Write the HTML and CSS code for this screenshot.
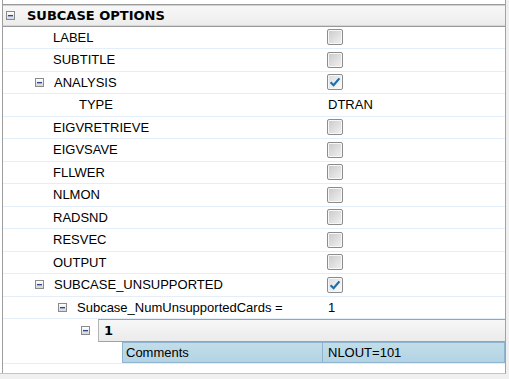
FILE: index.html
```html
<!DOCTYPE html>
<html>
<head>
<meta charset="utf-8">
<link rel="stylesheet" href="styles.css">
</head>
<body>
<div class="panel">
  <div class="grid">
    <div class="row head">
      <span class="tog"></span><span class="htext">SUBCASE OPTIONS</span>
    </div>
    <div class="row"><div class="name p1">LABEL</div><div class="val"><span class="cb"></span></div></div>
    <div class="row"><div class="name p1">SUBTITLE</div><div class="val"><span class="cb"></span></div></div>
    <div class="row"><div class="name i1"><span class="tog"></span>ANALYSIS</div><div class="val"><span class="cb on"><svg width="14" height="14" viewBox="0 0 14 14"><path d="M2.6 7.2 L5.6 10.2 L11.4 3.4" fill="none" stroke="#1a6fae" stroke-width="2.2"/></svg></span></div></div>
    <div class="row"><div class="name p2">TYPE</div><div class="val"><span class="vtext">DTRAN</span></div></div>
    <div class="row"><div class="name p1">EIGVRETRIEVE</div><div class="val"><span class="cb"></span></div></div>
    <div class="row"><div class="name p1">EIGVSAVE</div><div class="val"><span class="cb"></span></div></div>
    <div class="row"><div class="name p1">FLLWER</div><div class="val"><span class="cb"></span></div></div>
    <div class="row"><div class="name p1">NLMON</div><div class="val"><span class="cb"></span></div></div>
    <div class="row"><div class="name p1">RADSND</div><div class="val"><span class="cb"></span></div></div>
    <div class="row"><div class="name p1">RESVEC</div><div class="val"><span class="cb"></span></div></div>
    <div class="row"><div class="name p1">OUTPUT</div><div class="val"><span class="cb"></span></div></div>
    <div class="row"><div class="name i1"><span class="tog"></span>SUBCASE_UNSUPPORTED</div><div class="val"><span class="cb on"><svg width="14" height="14" viewBox="0 0 14 14"><path d="M2.6 7.2 L5.6 10.2 L11.4 3.4" fill="none" stroke="#1a6fae" stroke-width="2.2"/></svg></span></div></div>
    <div class="row"><div class="name i2"><span class="tog"></span>Subcase_NumUnsupportedCards =</div><div class="val"><span class="vtext">1</span></div></div>
    <div class="row grp">
      <span class="tog"></span>
      <div class="band"><span class="btext">1</span></div>
    </div>
    <div class="row sel">
      <div class="selbox">
        <div class="scell sname">Comments</div>
        <div class="scell svalue">NLOUT=101</div>
      </div>
    </div>
  </div>
</div>
</body>
</html>
```

FILE: styles.css
```css
html, body {
  margin: 0;
  padding: 0;
}
body {
  background: #f0f0f0;
  font-family: "Liberation Sans", Arial, sans-serif;
  font-size: 13px;
  color: #000;
}
.panel {
  width: 506px;
  height: 374px;
  box-sizing: border-box;
  background: #fff;
  padding-left: 2px;
  border-right: 1px solid #a3a3a3;
  border-bottom: 1px solid #c4c4c4;
}
.grid {
  height: 100%;
  box-sizing: border-box;
  border-left: 1px solid #9e9e9e;
  padding-top: 4px;
}
.row {
  height: 22.5px;
  box-sizing: border-box;
  display: flex;
  align-items: center;
  border-bottom: 1px solid #e4eef8;
}
.head {
  background: linear-gradient(#f8f8f8, #ececec);
  border-top: 1px solid #9a9a9a;
  border-bottom: 1px solid #9a9a9a;
  box-shadow: inset 0 1px 0 #d2d2d2, inset 0 -1px 0 #d6d6d6;
  padding-left: 3px;
}
.head .tog {
  margin-right: 12px;
}
.htext {
  font-family: "DejaVu Sans", sans-serif;
  font-weight: bold;
  font-size: 13px;
}
.tog {
  width: 9px;
  height: 9px;
  box-sizing: border-box;
  border: 1px solid #8a8a8a;
  background: linear-gradient(#ffffff, #d6d6d6);
  display: flex;
  align-items: center;
  justify-content: center;
  flex: none;
  margin-right: 10px;
}
.tog::after {
  content: "";
  width: 5px;
  height: 1px;
  background: #2a4a94;
  box-shadow: 0 1px 0 #9aaed6;
}
.name {
  width: 324px;
  flex: none;
  box-sizing: border-box;
  display: flex;
  align-items: center;
  white-space: nowrap;
}
.p1 { padding-left: 50px; }
.i1 { padding-left: 32px; }
.p2 { padding-left: 76px; }
.i2 { padding-left: 55px; }
.val {
  flex: 1;
  display: flex;
  align-items: center;
}
.vtext {
  padding-left: 1px;
}
.cb {
  width: 16px;
  height: 16px;
  box-sizing: border-box;
  border: 1px solid #8d8d8d;
  border-radius: 2px;
  background: linear-gradient(135deg, #c9c9c9, #f2f2f2);
  box-shadow: inset 0 0 0 1px #f7f7f7;
  display: flex;
  align-items: center;
  justify-content: center;
}
.cb.on {
  background: linear-gradient(135deg, #dcdcdc, #fcfcfc);
}
.cb svg {
  display: block;
}
.grp {
  padding-left: 78px;
  border-bottom: none;
}
.grp .tog {
  margin-right: 8px;
}
.band {
  flex: 1;
  align-self: stretch;
  box-sizing: border-box;
  border-top: 1px solid #a2a2a2;
  border-bottom: 1px solid #a2a2a2;
  border-left: 1px solid #b4b4b4;
  background: linear-gradient(#f7f7f7, #ebebeb);
  display: flex;
  align-items: center;
  padding-left: 5px;
}
.btext {
  font-family: "DejaVu Sans", sans-serif;
  font-weight: bold;
  font-size: 13px;
}
.sel {
  padding-left: 119px;
  align-items: stretch;
}
.selbox {
  flex: 1;
  display: flex;
  background: linear-gradient(#c2dde9, #b3d3e4);
  border: 1px solid #8fb4d0;
}
.scell {
  display: flex;
  align-items: center;
  box-sizing: border-box;
}
.sname {
  width: 200px;
  padding-left: 3px;
  border-right: 1px solid #8fb4d0;
}
.svalue {
  flex: 1;
  padding-left: 5px;
}
```
